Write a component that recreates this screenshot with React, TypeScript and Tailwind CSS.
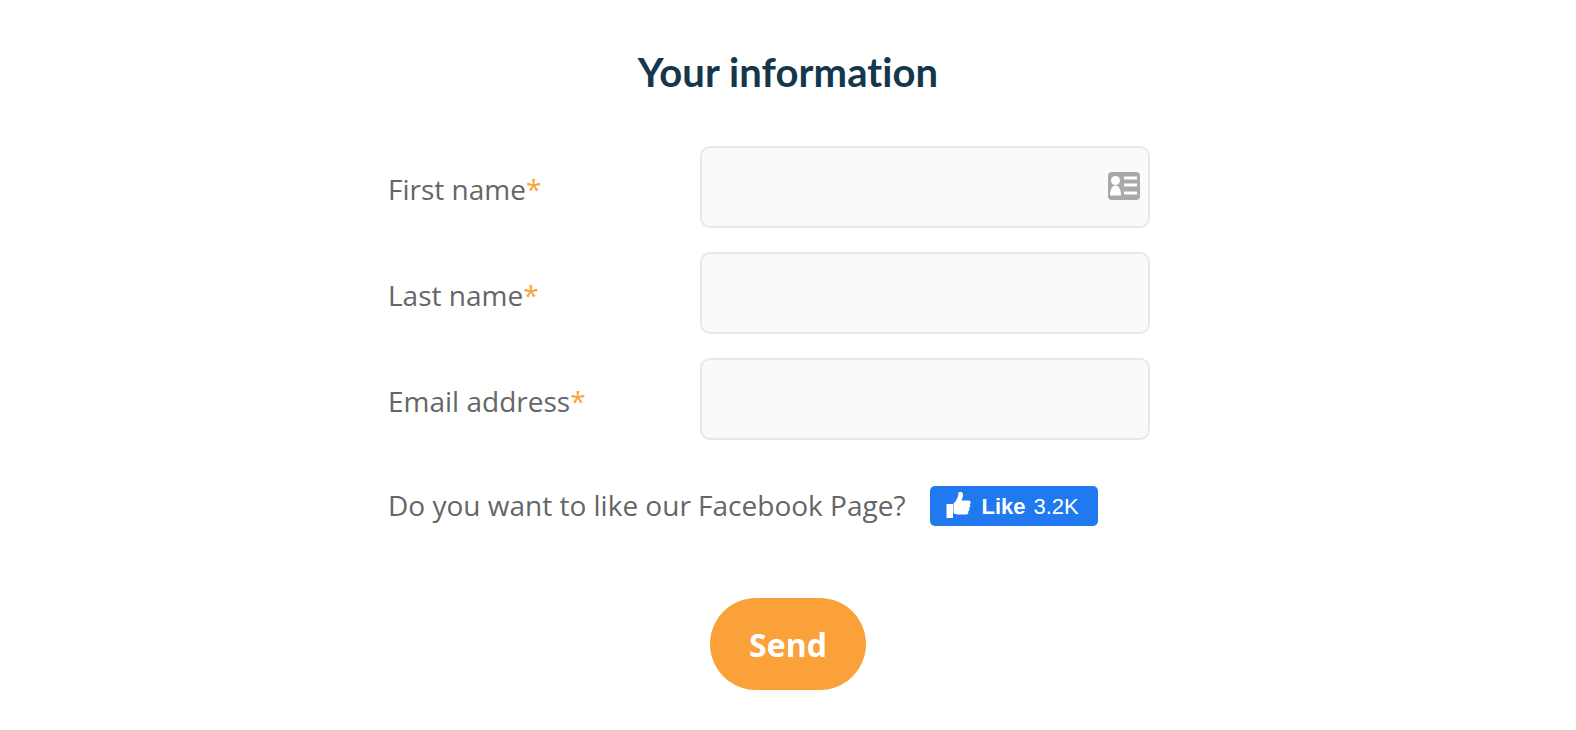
export default function App() {
  const fields = ["First name", "Last name", "Email address"];
  return (
    <div className="w-[1576px] h-[730px] bg-white overflow-hidden flex flex-col items-center font-['Open_Sans',sans-serif]">
      <h1 className="mt-[49px] h-[46px] leading-[46px] text-[40px] font-bold text-[#15374c] font-['Lato',sans-serif] text-center tracking-[0.1px] [font-variant-ligatures:none]">
        Your information
      </h1>
      <div className="mt-[51px] w-[800px] pr-[38px] flex flex-col gap-[24px]">
        {fields.map((f, i) => (
          <div key={f} className="flex items-start">
            <label className="w-[312px] pt-[24px] text-[28px] leading-[38px] text-[#666666]">
              {f}
              <span className="text-[#faa13a]">*</span>
            </label>
            <div className="relative w-[450px] h-[82px] rounded-[10px] border-2 border-[#e7e8ec] bg-[#f9fafc]">
              {i === 0 && (
                <svg className="absolute right-[8px] top-[24px]" width="32" height="28" viewBox="0 0 32 28">
                  <rect x="0" y="0" width="32" height="28" rx="4" fill="#a9a9a9" />
                  <circle cx="7.5" cy="8.5" r="4.5" fill="#ffffff" />
                  <path d="M2 23.5c0-6 2-10 5.5-10s5.500 4 5.500 10z" fill="#ffffff" />
                  <rect x="16" y="4.5" width="13" height="3" fill="#ffffff" />
                  <rect x="16" y="11.5" width="13" height="3" fill="#ffffff" />
                  <rect x="16" y="19.5" width="13" height="3" fill="#ffffff" />
                </svg>
              )}
            </div>
          </div>
        ))}
        <div className="flex items-center mt-[22px] h-[40px]">
          <span className="text-[28px] leading-[38px] text-[#666666] -translate-y-px">Do you want to like our Facebook Page?</span>
          <button className="ml-[25px] w-[168px] h-[40px] rounded-[5px] bg-[#2079ee] text-white flex items-center pl-[15px] font-['Liberation_Sans',sans-serif] text-[22px]">
            <svg width="28" height="28" viewBox="0 0 28 28" className="mr-[8px]" fill="#ffffff">
              <rect x="1.5" y="12" width="6.5" height="14" />
              <path transform="translate(-1.5 -1.5)" d="M10 13c3-2.500 4.500-6 5-10.500.2-1.600 3.600-1.800 4.300.6.6 2-.3 4.700-1.300 6.900h7.200c2.200 0 2.600 3 .8 3.800 1.200 1 1 3-.4 3.600.8 1.200.5 2.900-.9 3.400.5 1.500-.4 3.200-2.200 3.200H15c-2 0-3.400-.7-5-1.300z" />
            </svg>
            <span className="font-bold">Like</span>
            <span className="ml-[8px]">3.2K</span>
          </button>
        </div>
      </div>
      <button className="mt-[72px] w-[156px] h-[92px] pt-[1px] rounded-[46px] bg-[#faa13a] text-white text-[32px] font-bold">
        Send
      </button>
    </div>
  );
}
